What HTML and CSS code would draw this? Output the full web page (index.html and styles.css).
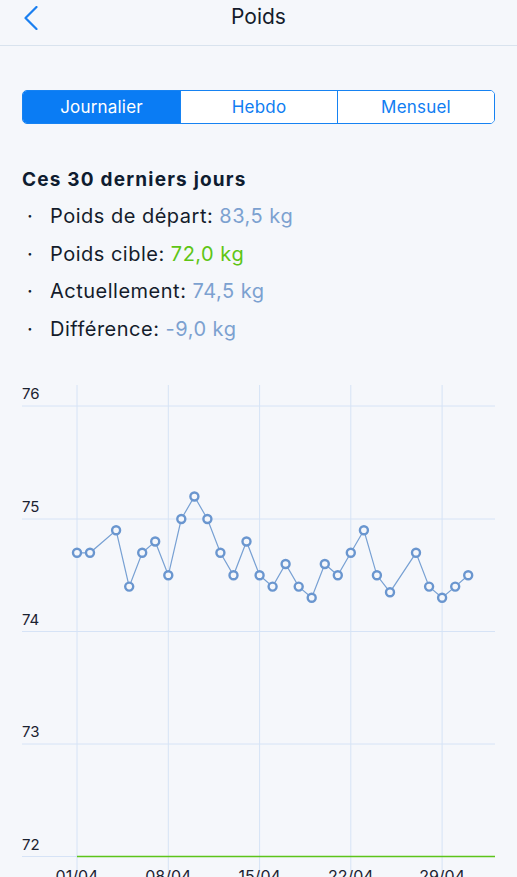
FILE: index.html
```html
<!DOCTYPE html>
<html lang="fr">
<head>
    <meta charset="UTF-8">
    <meta name="viewport" content="width=device-width, initial-scale=1.0">
    <title>Poids</title>
    <link rel="stylesheet" href="styles.css">
</head>
<body>
    <header class="topbar">
        <button class="back" aria-label="Retour">
            <svg width="14" height="24" viewBox="0 0 14 24">
                <polyline points="12.5,1 1.5,12 12.5,23" fill="none" stroke="#1a7ff0" stroke-width="2.2" stroke-linecap="round" stroke-linejoin="round"/>
            </svg>
        </button>
        <h1 class="title">Poids</h1>
        <span></span>
    </header>

    <div class="segments">
        <button class="segment active">Journalier</button>
        <button class="segment">Hebdo</button>
        <button class="segment">Mensuel</button>
    </div>

    <section class="stats">
        <h2>Ces 30 derniers jours</h2>
        <ul>
            <li>Poids de départ: <span class="value">83,5 kg</span></li>
            <li>Poids cible: <span class="value goal">72,0 kg</span></li>
            <li>Actuellement: <span class="value">74,5 kg</span></li>
            <li>Différence: <span class="value">-9,0 kg</span></li>
        </ul>
    </section>

    <svg class="chart" width="517" height="520" viewBox="0 370 517 520">
        <!-- grid -->
        <g class="grid">
            <line x1="22" y1="405" x2="495" y2="405"/>
            <line x1="22" y1="518" x2="495" y2="518"/>
            <line x1="22" y1="630.5" x2="495" y2="630.5"/>
            <line x1="22" y1="743" x2="495" y2="743"/>
            <line x1="22" y1="855.5" x2="495" y2="855.5"/>
            <line x1="77" y1="384" x2="77" y2="890"/>
            <line x1="168.3" y1="384" x2="168.3" y2="890"/>
            <line x1="259.6" y1="384" x2="259.6" y2="890"/>
            <line x1="350.8" y1="384" x2="350.8" y2="890"/>
            <line x1="442.1" y1="384" x2="442.1" y2="890"/>
        </g>
        <g class="ylabels">
            <text x="22" y="398">76</text>
            <text x="22" y="511">75</text>
            <text x="22" y="623.5">74</text>
            <text x="22" y="736">73</text>
            <text x="22" y="848.5">72</text>
        </g>
        <g class="xlabels">
            <text x="77" y="881">01/04</text>
            <text x="168.3" y="881">08/04</text>
            <text x="259.6" y="881">15/04</text>
            <text x="350.8" y="881">22/04</text>
            <text x="442.1" y="881">29/04</text>
        </g>
        <line class="target" x1="77" y1="855.5" x2="495" y2="855.5"/>
        <polyline class="series" points="77,551.8 90,551.8 116.1,529.3 129.2,585.6 142.2,551.8 155.2,540.5 168.3,574.3 181.3,518 194.4,495.5 207.4,518 220.4,551.8 233.5,574.3 246.5,540.5 259.6,574.3 272.6,585.6 285.6,563 298.7,585.6 311.7,596.8 324.8,563 337.8,574.3 350.8,551.8 363.9,529.3 376.9,574.3 390,591.2 416,551.8 429.1,585.6 442.1,596.8 455.2,585.6 468.2,574.3"/>
        <g class="points">
            <circle cx="77" cy="551.8" r="4"/>
            <circle cx="90" cy="551.8" r="4"/>
            <circle cx="116.1" cy="529.3" r="4"/>
            <circle cx="129.2" cy="585.6" r="4"/>
            <circle cx="142.2" cy="551.8" r="4"/>
            <circle cx="155.2" cy="540.5" r="4"/>
            <circle cx="168.3" cy="574.3" r="4"/>
            <circle cx="181.3" cy="518" r="4"/>
            <circle cx="194.4" cy="495.5" r="4"/>
            <circle cx="207.4" cy="518" r="4"/>
            <circle cx="220.4" cy="551.8" r="4"/>
            <circle cx="233.5" cy="574.3" r="4"/>
            <circle cx="246.5" cy="540.5" r="4"/>
            <circle cx="259.6" cy="574.3" r="4"/>
            <circle cx="272.6" cy="585.6" r="4"/>
            <circle cx="285.6" cy="563" r="4"/>
            <circle cx="298.7" cy="585.6" r="4"/>
            <circle cx="311.7" cy="596.8" r="4"/>
            <circle cx="324.8" cy="563" r="4"/>
            <circle cx="337.8" cy="574.3" r="4"/>
            <circle cx="350.8" cy="551.8" r="4"/>
            <circle cx="363.9" cy="529.3" r="4"/>
            <circle cx="376.9" cy="574.3" r="4"/>
            <circle cx="390" cy="591.2" r="4"/>
            <circle cx="416" cy="551.8" r="4"/>
            <circle cx="429.1" cy="585.6" r="4"/>
            <circle cx="442.1" cy="596.8" r="4"/>
            <circle cx="455.2" cy="585.6" r="4"/>
            <circle cx="468.2" cy="574.3" r="4"/>
        </g>
    </svg>
</body>
</html>
```

FILE: styles.css
```css
* {
    margin: 0;
    padding: 0;
    box-sizing: border-box;
    font-family: 'Inter', 'Noto Sans', sans-serif;
}

body {
    width: 517px;
    height: 877px;
    overflow: hidden;
    background: #f5f7fb;
    color: #141c2b;
}

.topbar {
    display: grid;
    grid-template-columns: 1fr auto 1fr;
    align-items: start;
    height: 46px;
    padding-top: 5px;
    border-bottom: 1px solid #d9e3ee;
}

.back {
    justify-self: start;
    margin-left: 24px;
    padding-top: 1px;
    border: none;
    background: none;
    line-height: 0;
}

.title {
    font-size: 21px;
    font-weight: 400;
    line-height: 24px;
}

.segments {
    display: grid;
    grid-template-columns: repeat(3, 1fr);
    margin: 44px 22px 0;
    height: 34px;
    border: 1px solid #1682f2;
    border-radius: 5px;
    overflow: hidden;
    background: #ffffff;
}

.segment {
    border: none;
    border-left: 1px solid #1682f2;
    background: #ffffff;
    color: #0f7df2;
    font-size: 17px;
    letter-spacing: 0.2px;
}

.segment:first-child {
    border-left: none;
}

.segment.active {
    background: #0a7cf4;
    color: #ffffff;
}

.stats {
    padding: 44px 22px 0;
}

.stats h2 {
    font-size: 19px;
    font-weight: 700;
    line-height: 24px;
    letter-spacing: 1.2px;
    color: #0f1c30;
}

.stats ul {
    list-style: none;
    margin-top: 6px;
}

.stats li {
    position: relative;
    padding-left: 28px;
    font-size: 20px;
    line-height: 37.5px;
    letter-spacing: 0.5px;
}

.stats li::before {
    content: '·';
    position: absolute;
    left: 5px;
}

.value {
    color: #7ca1d0;
}

.value.goal {
    color: #5ec515;
}

.chart {
    display: block;
    margin-top: 23px;
}

.grid line {
    stroke: #d6e3f6;
    stroke-width: 1;
}

.ylabels text,
.xlabels text {
    font-size: 15px;
    fill: #1b2230;
}

.xlabels text {
    text-anchor: middle;
    font-size: 16px;
}

.target {
    stroke: #5cc41a;
    stroke-width: 1.5;
}

.series {
    fill: none;
    stroke: #77a0d3;
    stroke-width: 1.2;
}

.points circle {
    fill: #f5f7fb;
    stroke: #6a96cf;
    stroke-width: 2.4;
}
```
